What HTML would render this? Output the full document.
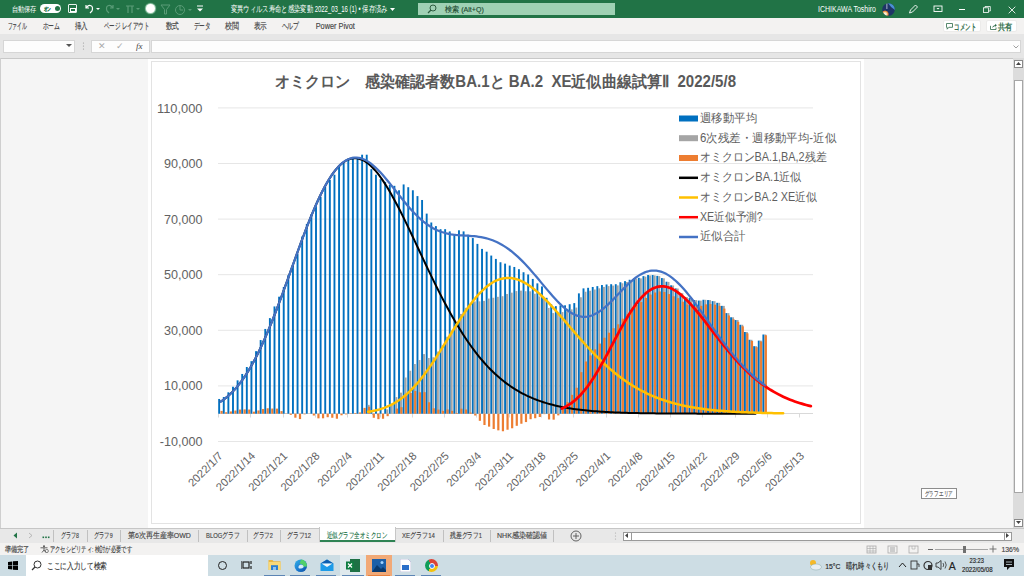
<!DOCTYPE html>
<html><head><meta charset="utf-8">
<style>
*{box-sizing:border-box;margin:0;padding:0}
html,body{width:1024px;height:576px;overflow:hidden;background:#f5f5f5;font-family:"Liberation Sans",sans-serif;}
.a{position:absolute}
.t{position:absolute;white-space:nowrap;line-height:1}
</style></head><body>
<!-- title bar -->
<div class="a" style="left:0;top:0;width:1024px;height:18px;background:#217346"></div>
<div class="a" style="left:40px;top:4px;width:21px;height:9px;border-radius:5px;background:#fff"></div>
<div class="a" style="left:54.5px;top:6px;width:5px;height:5px;border-radius:50%;background:#217346"></div>
<!-- save icon -->
<div class="a" style="left:68px;top:4px;width:9px;height:9px;border:1.2px solid #fff;border-radius:1px;opacity:.9"></div>
<div class="a" style="left:70px;top:8px;width:6px;height:4px;border:1px solid #fff"></div>
<!-- undo -->
<svg class="a" style="left:84px;top:3px" width="20" height="12" viewBox="0 0 20 12"><path d="M2,2 L2,5 L5,5 M2.5,4.5 C5,1 10,2 8,8 L6,10" fill="none" stroke="#fff" stroke-width="1.2"/><path d="M12,5 L16,5 L14,7z" fill="#fff"/></svg>
<svg class="a" style="left:104px;top:3px" width="20" height="12" viewBox="0 0 20 12"><path d="M9,2 L9,5 L6,5 M8.5,4.5 C6,1 1,2 3,8 L5,10" fill="none" stroke="#5a9c77" stroke-width="1.2"/><path d="M12,5 L16,5 L14,7z" fill="#5a9c77"/></svg>
<svg class="a" style="left:124px;top:3px" width="18" height="12" viewBox="0 0 18 12"><path d="M2,3 L10,3 M4,3 L4,10 M8,3 L8,10" fill="none" stroke="#5a9c77" stroke-width="1.2"/><path d="M12,5 L16,5 L14,7z" fill="#5a9c77"/></svg>
<div class="a" style="left:146px;top:4px;width:9px;height:9px;border-radius:50%;background:#fff;box-shadow:0 0 1px 1px #9ccfb1"></div>
<svg class="a" style="left:160px;top:3px" width="40" height="12" viewBox="0 0 40 12"><path d="M1,2 L10,2 L6.5,6.5 L6.5,11 L4.5,11 L4.5,6.5z" fill="none" stroke="#5a9c77" stroke-width="1"/><circle cx="20" cy="7" r="4.5" fill="none" stroke="#5a9c77" stroke-width="1"/><path d="M20,3 L20,7 L23,7" stroke="#5a9c77" fill="none"/><path d="M28,6 L32,6 L30,8z" fill="#5a9c77"/></svg>
<svg class="a" style="left:196px;top:4px" width="8" height="9" viewBox="0 0 8 9"><path d="M1,2 L7,2" stroke="#fff" stroke-width="1"/><path d="M1,4.5 L7,4.5 L4,7.5z" fill="#fff"/></svg>
<div class="a" style="left:418px;top:3px;width:197px;height:12px;background:#9fd1b4"></div>
<svg class="a" style="left:427px;top:4px" width="10" height="10" viewBox="0 0 10 10"><circle cx="6" cy="4" r="3" fill="none" stroke="#2d5d40" stroke-width="1"/><path d="M4,6 L1,9" stroke="#2d5d40" stroke-width="1.2"/></svg>
<svg class="a" style="left:882px;top:2.5px" width="13" height="13" viewBox="0 0 13 13"><defs><clipPath id="av"><circle cx="6.5" cy="6.5" r="6.3"/></clipPath><radialGradient id="fire" cx="0.35" cy="0.72" r="0.4"><stop offset="0" stop-color="#ffffff"/><stop offset="0.45" stop-color="#f7d9a8"/><stop offset="0.8" stop-color="#e07a2a"/><stop offset="1" stop-color="#e07a2a" stop-opacity="0"/></radialGradient></defs><g clip-path="url(#av)"><rect width="13" height="13" fill="#1e3566"/><path d="M6,0 L13,0 L13,7 Q9,5 6,0z" fill="#4b8fd6"/><circle cx="4.5" cy="9" r="5" fill="url(#fire)"/><rect x="4.5" y="0" width="0.8" height="6" fill="#cfd8e6"/></g></svg>
<svg class="a" style="left:908px;top:4px" width="11" height="10" viewBox="0 0 11 10"><path d="M1.5,9 L2.5,6 L7.5,1 L9.5,3 L4.5,8z" fill="none" stroke="#fff" stroke-width="0.9"/></svg>
<svg class="a" style="left:933px;top:5px" width="10" height="8" viewBox="0 0 10 8"><rect x="1" y="1" width="8" height="5.5" fill="none" stroke="#fff" stroke-width="0.9"/><path d="M3.5,3 L6.5,3 L5,4.5z" fill="#fff"/></svg>
<div class="a" style="left:958.5px;top:9px;width:6px;height:1px;background:#fff"></div>
<svg class="a" style="left:983px;top:6px" width="8" height="7" viewBox="0 0 8 7"><rect x="0.5" y="1.8" width="5" height="4.7" fill="none" stroke="#fff" stroke-width="0.8"/><path d="M2,1.8 L2,0.5 L7.3,0.5 L7.3,5 L5.5,5" fill="none" stroke="#fff" stroke-width="0.8"/></svg>
<svg class="a" style="left:1007.5px;top:5.5px" width="8" height="8" viewBox="0 0 8 8"><path d="M0.7,0.7 L7.3,7.3 M7.3,0.7 L0.7,7.3" stroke="#fff" stroke-width="0.85"/></svg>

<svg class="a" style="left:390px;top:8px" width="5" height="3" viewBox="0 0 5 3"><path d="M0,0 L5,0 L2.5,3z" fill="#fff"/></svg>
<!-- ribbon tabs -->
<div class="a" style="left:0;top:18px;width:1024px;height:16px;background:#f3f2f1"></div>
<div class="a" style="left:942.5px;top:20.3px;width:38.5px;height:11.7px;background:#fff;border:1px solid #ecebea;border-radius:2px"></div>
<div class="a" style="left:986px;top:20.3px;width:31.3px;height:11.7px;background:#fff;border:1px solid #ecebea;border-radius:2px"></div>

<svg class="a" style="left:946px;top:23px" width="7" height="7" viewBox="0 0 7 7"><path d="M0.5,0.5 L6.5,0.5 L6.5,4.3 L2.8,4.3 L1.2,6.2 L1.2,4.3 L0.5,4.3z" fill="none" stroke="#2d6b47" stroke-width="0.8"/></svg>
<svg class="a" style="left:990px;top:23px" width="7" height="7" viewBox="0 0 7 7"><path d="M0.5,2.8 L0.5,6.5 L6,6.5 L6,4.5" fill="none" stroke="#2d6b47" stroke-width="0.8"/><path d="M2,5 Q2.5,2.3 5.2,2 L5.2,0.7 L6.8,2.3 L5.2,3.9 L5.2,2.9 Q3.5,3.1 2,5z" fill="#2d6b47"/></svg>
<!-- formula bar -->
<div class="a" style="left:0;top:34px;width:1024px;height:25px;background:#e6e6e6;border-bottom:1px solid #c8c8c8"></div>
<div class="a" style="left:3px;top:40px;width:72px;height:13px;background:#fdfdfd;border:1px solid #d6d6d6"></div>
<svg class="a" style="left:66px;top:44px" width="6" height="4" viewBox="0 0 6 4"><path d="M0,0 L6,0 L3,3z" fill="#555"/></svg>
<svg class="a" style="left:82px;top:42px" width="3" height="9" viewBox="0 0 3 9"><circle cx="1.5" cy="1" r="0.6" fill="#999"/><circle cx="1.5" cy="4" r="0.6" fill="#999"/><circle cx="1.5" cy="7" r="0.6" fill="#999"/></svg>
<div class="a" style="left:91px;top:40px;width:59px;height:13px;background:#fdfdfd;border:1px solid #d6d6d6"></div>
<div class="t" style="left:98px;top:42px;font-size:9px;color:#aaa">✕</div>
<div class="t" style="left:116px;top:42px;font-size:9px;color:#aaa">✓</div>
<div class="t" style="left:136px;top:42px;font-size:9px;color:#444;font-family:'Liberation Serif',serif;font-style:italic">fx</div>
<div class="a" style="left:151px;top:40px;width:870px;height:13px;background:#fdfdfd;border:1px solid #d6d6d6"></div>
<svg class="a" style="left:1013px;top:45px" width="6" height="4" viewBox="0 0 6 4"><path d="M0.5,0.5 L3,3 L5.5,0.5" fill="none" stroke="#888" stroke-width="0.8"/></svg>

<!-- sheet area -->
<div class="a" style="left:0;top:59px;width:1013px;height:469px;background:#f5f5f5"></div>
<div class="a" style="left:0;top:58px;width:1px;height:470px;background:#cfcfcf"></div>
<!-- vertical scrollbar -->
<div class="a" style="left:1013px;top:58px;width:11px;height:470px;background:#dcdcdc"></div>
<div class="a" style="left:1014px;top:60px;width:8.5px;height:7.5px;background:#fff;border:1px solid #8a8a8a"></div>
<svg class="a" style="left:1016px;top:62px" width="5" height="3" viewBox="0 0 5 3"><path d="M0,3 L5,3 L2.5,0z" fill="#444"/></svg>
<div class="a" style="left:1014px;top:79.5px;width:8.5px;height:413px;background:#fff;border:1px solid #a6a6a6"></div>
<div class="a" style="left:1014px;top:518.5px;width:8.5px;height:8px;background:#fff;border:1px solid #8a8a8a"></div>
<svg class="a" style="left:1016px;top:521px" width="5" height="3" viewBox="0 0 5 3"><path d="M0,0 L5,0 L2.5,3z" fill="#444"/></svg>

<!-- chart -->
<div class="a" style="left:148px;top:59px;width:716px;height:469px;background:#fff"></div>
<div class="a" style="left:151px;top:61px;width:710px;height:463px;background:#fff;border:1px solid #e3e3e3"></div>
<svg width="1024" height="576" viewBox="0 0 1024 576" style="position:absolute;left:0;top:0">
<g><line x1="218" y1="107.90" x2="813" y2="107.90" stroke="#E6E6E6" stroke-width="1"/><line x1="218" y1="163.50" x2="813" y2="163.50" stroke="#E6E6E6" stroke-width="1"/><line x1="218" y1="219.10" x2="813" y2="219.10" stroke="#E6E6E6" stroke-width="1"/><line x1="218" y1="274.70" x2="813" y2="274.70" stroke="#E6E6E6" stroke-width="1"/><line x1="218" y1="330.30" x2="813" y2="330.30" stroke="#E6E6E6" stroke-width="1"/><line x1="218" y1="385.90" x2="813" y2="385.90" stroke="#E6E6E6" stroke-width="1"/><line x1="218" y1="441.50" x2="813" y2="441.50" stroke="#E6E6E6" stroke-width="1"/><line x1="218" y1="413.5" x2="813" y2="413.5" stroke="#D9D9D9" stroke-width="1"/><line x1="218.5" y1="413.5" x2="218.5" y2="417.5" stroke="#D9D9D9" stroke-width="1"/><line x1="250.5" y1="413.5" x2="250.5" y2="417.5" stroke="#D9D9D9" stroke-width="1"/><line x1="283.5" y1="413.5" x2="283.5" y2="417.5" stroke="#D9D9D9" stroke-width="1"/><line x1="315.5" y1="413.5" x2="315.5" y2="417.5" stroke="#D9D9D9" stroke-width="1"/><line x1="347.5" y1="413.5" x2="347.5" y2="417.5" stroke="#D9D9D9" stroke-width="1"/><line x1="380.5" y1="413.5" x2="380.5" y2="417.5" stroke="#D9D9D9" stroke-width="1"/><line x1="412.5" y1="413.5" x2="412.5" y2="417.5" stroke="#D9D9D9" stroke-width="1"/><line x1="444.5" y1="413.5" x2="444.5" y2="417.5" stroke="#D9D9D9" stroke-width="1"/><line x1="476.5" y1="413.5" x2="476.5" y2="417.5" stroke="#D9D9D9" stroke-width="1"/><line x1="509.5" y1="413.5" x2="509.5" y2="417.5" stroke="#D9D9D9" stroke-width="1"/><line x1="541.5" y1="413.5" x2="541.5" y2="417.5" stroke="#D9D9D9" stroke-width="1"/><line x1="573.5" y1="413.5" x2="573.5" y2="417.5" stroke="#D9D9D9" stroke-width="1"/><line x1="606.5" y1="413.5" x2="606.5" y2="417.5" stroke="#D9D9D9" stroke-width="1"/><line x1="638.5" y1="413.5" x2="638.5" y2="417.5" stroke="#D9D9D9" stroke-width="1"/><line x1="670.5" y1="413.5" x2="670.5" y2="417.5" stroke="#D9D9D9" stroke-width="1"/><line x1="702.5" y1="413.5" x2="702.5" y2="417.5" stroke="#D9D9D9" stroke-width="1"/><line x1="735.5" y1="413.5" x2="735.5" y2="417.5" stroke="#D9D9D9" stroke-width="1"/><line x1="767.5" y1="413.5" x2="767.5" y2="417.5" stroke="#D9D9D9" stroke-width="1"/><line x1="799.5" y1="413.5" x2="799.5" y2="417.5" stroke="#D9D9D9" stroke-width="1"/></g>
<g><rect x="218.20" y="398.97" width="1.90" height="14.73" fill="#0070C0"/><rect x="220.50" y="410.90" width="2.20" height="2.80" fill="#ED7D31"/><rect x="222.81" y="397.03" width="1.90" height="16.67" fill="#0070C0"/><rect x="225.11" y="412.23" width="2.20" height="1.47" fill="#ED7D31"/><rect x="227.42" y="392.30" width="1.90" height="21.40" fill="#0070C0"/><rect x="229.72" y="411.44" width="2.20" height="2.26" fill="#ED7D31"/><rect x="232.04" y="386.74" width="1.90" height="26.96" fill="#0070C0"/><rect x="234.34" y="410.53" width="2.20" height="3.17" fill="#ED7D31"/><rect x="236.65" y="380.35" width="1.90" height="33.35" fill="#0070C0"/><rect x="238.95" y="409.56" width="2.20" height="4.14" fill="#ED7D31"/><rect x="241.26" y="373.96" width="1.90" height="39.74" fill="#0070C0"/><rect x="243.56" y="409.40" width="2.20" height="4.30" fill="#ED7D31"/><rect x="245.87" y="367.01" width="1.90" height="46.69" fill="#0070C0"/><rect x="248.17" y="409.54" width="2.20" height="4.16" fill="#ED7D31"/><rect x="250.48" y="361.18" width="1.90" height="52.52" fill="#0070C0"/><rect x="252.78" y="411.65" width="2.20" height="2.05" fill="#ED7D31"/><rect x="255.10" y="351.17" width="1.90" height="62.53" fill="#0070C0"/><rect x="257.40" y="410.45" width="2.20" height="3.25" fill="#ED7D31"/><rect x="259.71" y="340.06" width="1.90" height="73.64" fill="#0070C0"/><rect x="262.01" y="408.96" width="2.20" height="4.74" fill="#ED7D31"/><rect x="264.32" y="328.94" width="1.90" height="84.76" fill="#0070C0"/><rect x="266.62" y="408.26" width="2.20" height="5.44" fill="#ED7D31"/><rect x="268.93" y="318.10" width="1.90" height="95.60" fill="#0070C0"/><rect x="271.23" y="408.54" width="2.20" height="5.16" fill="#ED7D31"/><rect x="273.54" y="306.43" width="1.90" height="107.27" fill="#0070C0"/><rect x="275.84" y="408.60" width="2.20" height="5.10" fill="#ED7D31"/><rect x="278.16" y="296.70" width="1.90" height="117.00" fill="#0070C0"/><rect x="280.46" y="411.11" width="2.20" height="2.59" fill="#ED7D31"/><rect x="282.77" y="286.98" width="1.90" height="126.72" fill="#0070C0"/><rect x="285.07" y="413.70" width="2.20" height="0.28" fill="#ED7D31"/><rect x="287.38" y="275.03" width="1.90" height="138.67" fill="#0070C0"/><rect x="289.68" y="413.70" width="2.20" height="1.14" fill="#ED7D31"/><rect x="291.99" y="265.02" width="1.90" height="148.68" fill="#0070C0"/><rect x="294.29" y="413.70" width="2.20" height="4.01" fill="#ED7D31"/><rect x="296.60" y="253.63" width="1.90" height="160.07" fill="#0070C0"/><rect x="298.90" y="413.70" width="2.20" height="5.38" fill="#ED7D31"/><rect x="301.22" y="236.40" width="1.90" height="177.30" fill="#0070C0"/><rect x="303.52" y="413.70" width="2.20" height="0.63" fill="#ED7D31"/><rect x="305.83" y="223.89" width="1.90" height="189.81" fill="#0070C0"/><rect x="308.13" y="413.70" width="2.20" height="0.14" fill="#ED7D31"/><rect x="310.44" y="214.17" width="1.90" height="199.53" fill="#0070C0"/><rect x="312.74" y="413.70" width="2.20" height="1.81" fill="#ED7D31"/><rect x="315.05" y="206.39" width="1.90" height="207.31" fill="#0070C0"/><rect x="317.35" y="413.70" width="2.20" height="4.65" fill="#ED7D31"/><rect x="319.66" y="196.66" width="1.90" height="217.04" fill="#0070C0"/><rect x="321.96" y="413.70" width="2.20" height="4.61" fill="#ED7D31"/><rect x="324.28" y="186.93" width="1.90" height="226.77" fill="#0070C0"/><rect x="326.58" y="413.70" width="2.20" height="3.52" fill="#ED7D31"/><rect x="328.89" y="179.99" width="1.90" height="233.71" fill="#0070C0"/><rect x="331.19" y="413.70" width="2.20" height="4.06" fill="#ED7D31"/><rect x="333.50" y="174.71" width="1.90" height="238.99" fill="#0070C0"/><rect x="335.80" y="413.70" width="2.20" height="5.01" fill="#ED7D31"/><rect x="338.11" y="166.37" width="1.90" height="247.33" fill="#0070C0"/><rect x="340.41" y="413.70" width="2.20" height="1.59" fill="#ED7D31"/><rect x="342.72" y="161.92" width="1.90" height="251.78" fill="#0070C0"/><rect x="345.02" y="413.70" width="2.20" height="0.71" fill="#ED7D31"/><rect x="347.34" y="158.59" width="1.90" height="255.11" fill="#0070C0"/><rect x="349.64" y="413.27" width="2.20" height="0.43" fill="#ED7D31"/><rect x="351.95" y="157.48" width="1.90" height="256.22" fill="#0070C0"/><rect x="354.25" y="412.98" width="2.20" height="0.72" fill="#ED7D31"/><rect x="356.56" y="157.48" width="1.90" height="256.22" fill="#0070C0"/><rect x="358.86" y="412.47" width="2.20" height="1.23" fill="#ED7D31"/><rect x="361.17" y="154.70" width="1.90" height="259.00" fill="#0070C0"/><rect x="363.47" y="407.89" width="2.20" height="5.81" fill="#ED7D31"/><rect x="365.78" y="154.70" width="1.90" height="259.00" fill="#0070C0"/><rect x="367.68" y="404.85" width="2.00" height="8.85" fill="#A5A5A5"/><rect x="368.08" y="406.74" width="2.20" height="6.96" fill="#ED7D31"/><rect x="370.40" y="169.15" width="1.90" height="244.55" fill="#0070C0"/><rect x="372.30" y="413.70" width="2.00" height="1.42" fill="#A5A5A5"/><rect x="372.70" y="413.70" width="2.20" height="4.10" fill="#ED7D31"/><rect x="375.01" y="174.71" width="1.90" height="238.99" fill="#0070C0"/><rect x="376.91" y="413.70" width="2.00" height="1.73" fill="#A5A5A5"/><rect x="377.31" y="413.70" width="2.20" height="5.46" fill="#ED7D31"/><rect x="379.62" y="179.15" width="1.90" height="234.55" fill="#0070C0"/><rect x="381.92" y="413.70" width="2.20" height="5.06" fill="#ED7D31"/><rect x="384.23" y="181.93" width="1.90" height="231.77" fill="#0070C0"/><rect x="386.13" y="409.41" width="2.00" height="4.29" fill="#A5A5A5"/><rect x="386.53" y="413.70" width="2.20" height="2.49" fill="#ED7D31"/><rect x="388.84" y="184.99" width="1.90" height="228.71" fill="#0070C0"/><rect x="390.74" y="404.68" width="2.00" height="9.02" fill="#A5A5A5"/><rect x="391.14" y="413.58" width="2.20" height="0.12" fill="#ED7D31"/><rect x="393.46" y="185.82" width="1.90" height="227.88" fill="#0070C0"/><rect x="395.36" y="397.11" width="2.00" height="16.59" fill="#A5A5A5"/><rect x="395.76" y="408.58" width="2.20" height="5.12" fill="#ED7D31"/><rect x="398.07" y="190.27" width="1.90" height="223.43" fill="#0070C0"/><rect x="399.97" y="392.65" width="2.00" height="21.05" fill="#A5A5A5"/><rect x="400.37" y="407.19" width="2.20" height="6.51" fill="#ED7D31"/><rect x="402.68" y="184.43" width="1.90" height="229.27" fill="#0070C0"/><rect x="404.58" y="377.52" width="2.00" height="36.18" fill="#A5A5A5"/><rect x="404.98" y="395.65" width="2.20" height="18.05" fill="#ED7D31"/><rect x="407.29" y="187.21" width="1.90" height="226.49" fill="#0070C0"/><rect x="409.19" y="370.72" width="2.00" height="42.98" fill="#A5A5A5"/><rect x="409.59" y="393.01" width="2.20" height="20.69" fill="#ED7D31"/><rect x="411.90" y="190.27" width="1.90" height="223.43" fill="#0070C0"/><rect x="413.80" y="364.03" width="2.00" height="49.67" fill="#A5A5A5"/><rect x="414.20" y="391.02" width="2.20" height="22.68" fill="#ED7D31"/><rect x="416.52" y="196.10" width="1.90" height="217.60" fill="#0070C0"/><rect x="418.42" y="360.03" width="2.00" height="53.67" fill="#A5A5A5"/><rect x="418.82" y="392.28" width="2.20" height="21.42" fill="#ED7D31"/><rect x="421.13" y="199.99" width="1.90" height="213.71" fill="#0070C0"/><rect x="423.03" y="354.09" width="2.00" height="59.61" fill="#A5A5A5"/><rect x="423.43" y="392.14" width="2.20" height="21.56" fill="#ED7D31"/><rect x="425.74" y="213.61" width="1.90" height="200.09" fill="#0070C0"/><rect x="427.64" y="357.98" width="2.00" height="55.72" fill="#A5A5A5"/><rect x="428.04" y="402.28" width="2.20" height="11.42" fill="#ED7D31"/><rect x="430.35" y="222.50" width="1.90" height="191.20" fill="#0070C0"/><rect x="432.25" y="357.29" width="2.00" height="56.41" fill="#A5A5A5"/><rect x="432.65" y="408.29" width="2.20" height="5.41" fill="#ED7D31"/><rect x="434.96" y="226.12" width="1.90" height="187.58" fill="#0070C0"/><rect x="436.86" y="351.56" width="2.00" height="62.14" fill="#A5A5A5"/><rect x="437.26" y="409.58" width="2.20" height="4.12" fill="#ED7D31"/><rect x="439.58" y="229.17" width="1.90" height="184.53" fill="#0070C0"/><rect x="441.48" y="345.54" width="2.00" height="68.16" fill="#A5A5A5"/><rect x="441.88" y="410.84" width="2.20" height="2.86" fill="#ED7D31"/><rect x="444.19" y="229.17" width="1.90" height="184.53" fill="#0070C0"/><rect x="446.09" y="336.79" width="2.00" height="76.91" fill="#A5A5A5"/><rect x="446.49" y="409.52" width="2.20" height="4.18" fill="#ED7D31"/><rect x="448.80" y="231.40" width="1.90" height="182.30" fill="#0070C0"/><rect x="450.70" y="330.62" width="2.00" height="83.08" fill="#A5A5A5"/><rect x="451.10" y="410.82" width="2.20" height="2.88" fill="#ED7D31"/><rect x="453.41" y="234.18" width="1.90" height="179.52" fill="#0070C0"/><rect x="455.31" y="325.39" width="2.00" height="88.31" fill="#A5A5A5"/><rect x="455.71" y="412.98" width="2.20" height="0.72" fill="#ED7D31"/><rect x="458.02" y="230.29" width="1.90" height="183.41" fill="#0070C0"/><rect x="459.92" y="313.89" width="2.00" height="99.81" fill="#A5A5A5"/><rect x="460.32" y="408.69" width="2.20" height="5.01" fill="#ED7D31"/><rect x="462.64" y="231.40" width="1.90" height="182.30" fill="#0070C0"/><rect x="464.54" y="307.82" width="2.00" height="105.88" fill="#A5A5A5"/><rect x="464.94" y="409.51" width="2.20" height="4.19" fill="#ED7D31"/><rect x="467.25" y="234.73" width="1.90" height="178.97" fill="#0070C0"/><rect x="469.15" y="304.40" width="2.00" height="109.30" fill="#A5A5A5"/><rect x="469.55" y="412.56" width="2.20" height="1.14" fill="#ED7D31"/><rect x="471.86" y="238.07" width="1.90" height="175.63" fill="#0070C0"/><rect x="473.76" y="301.41" width="2.00" height="112.29" fill="#A5A5A5"/><rect x="474.16" y="413.70" width="2.20" height="1.83" fill="#ED7D31"/><rect x="476.47" y="243.90" width="1.90" height="169.80" fill="#0070C0"/><rect x="478.37" y="301.34" width="2.00" height="112.36" fill="#A5A5A5"/><rect x="478.77" y="413.70" width="2.20" height="7.11" fill="#ED7D31"/><rect x="481.08" y="248.91" width="1.90" height="164.79" fill="#0070C0"/><rect x="482.98" y="300.86" width="2.00" height="112.84" fill="#A5A5A5"/><rect x="483.38" y="413.70" width="2.20" height="11.30" fill="#ED7D31"/><rect x="485.70" y="251.68" width="1.90" height="162.02" fill="#0070C0"/><rect x="487.60" y="298.56" width="2.00" height="115.14" fill="#A5A5A5"/><rect x="488.00" y="413.70" width="2.20" height="12.93" fill="#ED7D31"/><rect x="490.31" y="255.57" width="1.90" height="158.13" fill="#0070C0"/><rect x="492.21" y="297.77" width="2.00" height="115.93" fill="#A5A5A5"/><rect x="492.61" y="413.70" width="2.20" height="15.29" fill="#ED7D31"/><rect x="494.92" y="258.91" width="1.90" height="154.79" fill="#0070C0"/><rect x="496.82" y="296.80" width="2.00" height="116.90" fill="#A5A5A5"/><rect x="497.22" y="413.70" width="2.20" height="16.65" fill="#ED7D31"/><rect x="499.53" y="262.24" width="1.90" height="151.46" fill="#0070C0"/><rect x="501.43" y="296.20" width="2.00" height="117.50" fill="#A5A5A5"/><rect x="501.83" y="413.70" width="2.20" height="17.55" fill="#ED7D31"/><rect x="504.14" y="263.63" width="1.90" height="150.07" fill="#0070C0"/><rect x="506.04" y="293.99" width="2.00" height="119.71" fill="#A5A5A5"/><rect x="506.44" y="413.70" width="2.20" height="16.03" fill="#ED7D31"/><rect x="508.76" y="265.58" width="1.90" height="148.12" fill="#0070C0"/><rect x="510.66" y="292.66" width="2.00" height="121.04" fill="#A5A5A5"/><rect x="511.06" y="413.70" width="2.20" height="14.58" fill="#ED7D31"/><rect x="513.37" y="266.97" width="1.90" height="146.73" fill="#0070C0"/><rect x="515.27" y="291.07" width="2.00" height="122.63" fill="#A5A5A5"/><rect x="515.67" y="413.70" width="2.20" height="12.11" fill="#ED7D31"/><rect x="517.98" y="269.19" width="1.90" height="144.51" fill="#0070C0"/><rect x="519.88" y="290.61" width="2.00" height="123.09" fill="#A5A5A5"/><rect x="520.28" y="413.70" width="2.20" height="10.03" fill="#ED7D31"/><rect x="522.59" y="272.25" width="1.90" height="141.45" fill="#0070C0"/><rect x="524.49" y="291.23" width="2.00" height="122.47" fill="#A5A5A5"/><rect x="524.89" y="413.70" width="2.20" height="8.37" fill="#ED7D31"/><rect x="527.20" y="274.47" width="1.90" height="139.23" fill="#0070C0"/><rect x="529.10" y="291.27" width="2.00" height="122.43" fill="#A5A5A5"/><rect x="529.50" y="413.70" width="2.20" height="5.51" fill="#ED7D31"/><rect x="531.82" y="278.92" width="1.90" height="134.78" fill="#0070C0"/><rect x="533.72" y="293.75" width="2.00" height="119.95" fill="#A5A5A5"/><rect x="534.12" y="413.70" width="2.20" height="4.54" fill="#ED7D31"/><rect x="536.43" y="283.36" width="1.90" height="130.34" fill="#0070C0"/><rect x="538.33" y="296.44" width="2.00" height="117.26" fill="#A5A5A5"/><rect x="538.73" y="413.70" width="2.20" height="3.30" fill="#ED7D31"/><rect x="541.04" y="286.42" width="1.90" height="127.28" fill="#0070C0"/><rect x="542.94" y="297.93" width="2.00" height="115.77" fill="#A5A5A5"/><rect x="543.34" y="413.70" width="2.20" height="0.45" fill="#ED7D31"/><rect x="545.65" y="297.82" width="1.90" height="115.88" fill="#0070C0"/><rect x="547.55" y="307.92" width="2.00" height="105.78" fill="#A5A5A5"/><rect x="547.95" y="413.70" width="2.20" height="5.77" fill="#ED7D31"/><rect x="550.26" y="304.21" width="1.90" height="109.49" fill="#0070C0"/><rect x="552.16" y="313.07" width="2.00" height="100.63" fill="#A5A5A5"/><rect x="552.56" y="413.70" width="2.20" height="5.97" fill="#ED7D31"/><rect x="554.88" y="306.15" width="1.90" height="107.55" fill="#0070C0"/><rect x="556.78" y="313.91" width="2.00" height="99.79" fill="#A5A5A5"/><rect x="557.18" y="413.70" width="2.20" height="1.67" fill="#ED7D31"/><rect x="559.49" y="305.32" width="1.90" height="108.38" fill="#0070C0"/><rect x="561.39" y="312.09" width="2.00" height="101.61" fill="#A5A5A5"/><rect x="561.79" y="408.28" width="2.20" height="5.42" fill="#ED7D31"/><rect x="564.10" y="305.32" width="1.90" height="108.38" fill="#0070C0"/><rect x="566.00" y="311.23" width="2.00" height="102.47" fill="#A5A5A5"/><rect x="566.40" y="402.07" width="2.20" height="11.63" fill="#ED7D31"/><rect x="568.71" y="304.21" width="1.90" height="109.49" fill="#0070C0"/><rect x="570.61" y="309.36" width="2.00" height="104.34" fill="#A5A5A5"/><rect x="571.01" y="394.83" width="2.20" height="18.87" fill="#ED7D31"/><rect x="573.32" y="303.10" width="1.90" height="110.60" fill="#0070C0"/><rect x="575.22" y="307.57" width="2.00" height="106.13" fill="#A5A5A5"/><rect x="575.62" y="387.71" width="2.20" height="25.99" fill="#ED7D31"/><rect x="577.94" y="293.37" width="1.90" height="120.33" fill="#0070C0"/><rect x="579.84" y="297.26" width="2.00" height="116.44" fill="#A5A5A5"/><rect x="580.24" y="372.13" width="2.20" height="41.57" fill="#ED7D31"/><rect x="582.55" y="288.37" width="1.90" height="125.33" fill="#0070C0"/><rect x="584.45" y="291.74" width="2.00" height="121.96" fill="#A5A5A5"/><rect x="584.85" y="361.46" width="2.20" height="52.24" fill="#ED7D31"/><rect x="587.16" y="287.81" width="1.90" height="125.89" fill="#0070C0"/><rect x="589.06" y="290.73" width="2.00" height="122.97" fill="#A5A5A5"/><rect x="589.46" y="355.44" width="2.20" height="58.26" fill="#ED7D31"/><rect x="591.77" y="286.98" width="1.90" height="126.72" fill="#0070C0"/><rect x="593.67" y="289.50" width="2.00" height="124.20" fill="#A5A5A5"/><rect x="594.07" y="349.38" width="2.20" height="64.32" fill="#ED7D31"/><rect x="596.38" y="286.14" width="1.90" height="127.56" fill="#0070C0"/><rect x="598.28" y="288.32" width="2.00" height="125.38" fill="#A5A5A5"/><rect x="598.68" y="343.56" width="2.20" height="70.14" fill="#ED7D31"/><rect x="601.00" y="285.03" width="1.90" height="128.67" fill="#0070C0"/><rect x="602.90" y="286.91" width="2.00" height="126.79" fill="#A5A5A5"/><rect x="603.30" y="337.72" width="2.20" height="75.98" fill="#ED7D31"/><rect x="605.61" y="284.48" width="1.90" height="129.22" fill="#0070C0"/><rect x="607.51" y="286.10" width="2.00" height="127.60" fill="#A5A5A5"/><rect x="607.91" y="332.70" width="2.20" height="81.00" fill="#ED7D31"/><rect x="610.22" y="284.20" width="1.90" height="129.50" fill="#0070C0"/><rect x="612.12" y="285.59" width="2.00" height="128.11" fill="#A5A5A5"/><rect x="612.52" y="328.22" width="2.20" height="85.48" fill="#ED7D31"/><rect x="614.83" y="284.20" width="1.90" height="129.50" fill="#0070C0"/><rect x="616.73" y="285.39" width="2.00" height="128.31" fill="#A5A5A5"/><rect x="617.13" y="324.28" width="2.20" height="89.42" fill="#ED7D31"/><rect x="619.44" y="282.25" width="1.90" height="131.45" fill="#0070C0"/><rect x="621.34" y="283.28" width="2.00" height="130.42" fill="#A5A5A5"/><rect x="621.74" y="318.67" width="2.20" height="95.03" fill="#ED7D31"/><rect x="624.06" y="281.14" width="1.90" height="132.56" fill="#0070C0"/><rect x="625.96" y="282.02" width="2.00" height="131.68" fill="#A5A5A5"/><rect x="626.36" y="314.14" width="2.20" height="99.56" fill="#ED7D31"/><rect x="628.67" y="279.75" width="1.90" height="133.95" fill="#0070C0"/><rect x="630.57" y="280.50" width="2.00" height="133.20" fill="#A5A5A5"/><rect x="630.97" y="309.59" width="2.20" height="104.11" fill="#ED7D31"/><rect x="633.28" y="278.08" width="1.90" height="135.62" fill="#0070C0"/><rect x="635.18" y="278.73" width="2.00" height="134.97" fill="#A5A5A5"/><rect x="635.58" y="305.01" width="2.20" height="108.69" fill="#ED7D31"/><rect x="637.89" y="277.81" width="1.90" height="135.89" fill="#0070C0"/><rect x="639.79" y="278.36" width="2.00" height="135.34" fill="#A5A5A5"/><rect x="640.19" y="302.05" width="2.20" height="111.65" fill="#ED7D31"/><rect x="642.50" y="276.14" width="1.90" height="137.56" fill="#0070C0"/><rect x="644.40" y="276.61" width="2.00" height="137.09" fill="#A5A5A5"/><rect x="644.80" y="297.92" width="2.20" height="115.78" fill="#ED7D31"/><rect x="647.12" y="275.03" width="1.90" height="138.67" fill="#0070C0"/><rect x="649.02" y="275.43" width="2.00" height="138.27" fill="#A5A5A5"/><rect x="649.42" y="294.55" width="2.20" height="119.15" fill="#ED7D31"/><rect x="651.73" y="275.03" width="1.90" height="138.67" fill="#0070C0"/><rect x="653.63" y="275.37" width="2.00" height="138.33" fill="#A5A5A5"/><rect x="654.03" y="292.50" width="2.20" height="121.20" fill="#ED7D31"/><rect x="656.34" y="275.86" width="1.90" height="137.84" fill="#0070C0"/><rect x="658.24" y="276.15" width="2.00" height="137.55" fill="#A5A5A5"/><rect x="658.64" y="291.46" width="2.20" height="122.24" fill="#ED7D31"/><rect x="660.95" y="278.08" width="1.90" height="135.62" fill="#0070C0"/><rect x="662.85" y="278.33" width="2.00" height="135.37" fill="#A5A5A5"/><rect x="663.25" y="291.99" width="2.20" height="121.71" fill="#ED7D31"/><rect x="665.56" y="281.70" width="1.90" height="132.00" fill="#0070C0"/><rect x="667.46" y="281.91" width="2.00" height="131.79" fill="#A5A5A5"/><rect x="667.86" y="294.07" width="2.20" height="119.63" fill="#ED7D31"/><rect x="670.18" y="285.31" width="1.90" height="128.39" fill="#0070C0"/><rect x="672.08" y="285.49" width="2.00" height="128.21" fill="#A5A5A5"/><rect x="672.48" y="296.30" width="2.20" height="117.40" fill="#ED7D31"/><rect x="674.79" y="288.37" width="1.90" height="125.33" fill="#0070C0"/><rect x="676.69" y="288.52" width="2.00" height="125.18" fill="#A5A5A5"/><rect x="677.09" y="298.12" width="2.20" height="115.58" fill="#ED7D31"/><rect x="679.40" y="293.09" width="1.90" height="120.61" fill="#0070C0"/><rect x="681.30" y="293.22" width="2.00" height="120.48" fill="#A5A5A5"/><rect x="681.70" y="301.72" width="2.20" height="111.98" fill="#ED7D31"/><rect x="684.01" y="296.98" width="1.90" height="116.72" fill="#0070C0"/><rect x="685.91" y="297.09" width="2.00" height="116.61" fill="#A5A5A5"/><rect x="686.31" y="304.61" width="2.20" height="109.09" fill="#ED7D31"/><rect x="688.62" y="298.09" width="1.90" height="115.61" fill="#0070C0"/><rect x="690.52" y="298.18" width="2.00" height="115.52" fill="#A5A5A5"/><rect x="690.92" y="304.83" width="2.20" height="108.87" fill="#ED7D31"/><rect x="693.24" y="300.04" width="1.90" height="113.66" fill="#0070C0"/><rect x="695.14" y="300.12" width="2.00" height="113.58" fill="#A5A5A5"/><rect x="695.54" y="305.97" width="2.20" height="107.73" fill="#ED7D31"/><rect x="697.85" y="300.59" width="1.90" height="113.11" fill="#0070C0"/><rect x="699.75" y="300.66" width="2.00" height="113.04" fill="#A5A5A5"/><rect x="700.15" y="305.82" width="2.20" height="107.88" fill="#ED7D31"/><rect x="702.46" y="299.76" width="1.90" height="113.94" fill="#0070C0"/><rect x="704.36" y="299.82" width="2.00" height="113.88" fill="#A5A5A5"/><rect x="704.76" y="304.35" width="2.20" height="109.35" fill="#ED7D31"/><rect x="707.07" y="300.04" width="1.90" height="113.66" fill="#0070C0"/><rect x="708.97" y="300.08" width="2.00" height="113.62" fill="#A5A5A5"/><rect x="709.37" y="304.06" width="2.20" height="109.64" fill="#ED7D31"/><rect x="711.68" y="301.15" width="1.90" height="112.55" fill="#0070C0"/><rect x="713.58" y="301.19" width="2.00" height="112.51" fill="#A5A5A5"/><rect x="713.98" y="304.68" width="2.20" height="109.02" fill="#ED7D31"/><rect x="716.30" y="302.82" width="1.90" height="110.88" fill="#0070C0"/><rect x="718.20" y="302.85" width="2.00" height="110.85" fill="#A5A5A5"/><rect x="718.60" y="305.90" width="2.20" height="107.80" fill="#ED7D31"/><rect x="720.91" y="305.87" width="1.90" height="107.83" fill="#0070C0"/><rect x="722.81" y="305.90" width="2.00" height="107.80" fill="#A5A5A5"/><rect x="723.21" y="308.57" width="2.20" height="105.13" fill="#ED7D31"/><rect x="725.52" y="313.10" width="1.90" height="100.60" fill="#0070C0"/><rect x="727.42" y="313.12" width="2.00" height="100.58" fill="#A5A5A5"/><rect x="727.82" y="315.46" width="2.20" height="98.24" fill="#ED7D31"/><rect x="730.13" y="317.27" width="1.90" height="96.43" fill="#0070C0"/><rect x="732.03" y="317.29" width="2.00" height="96.41" fill="#A5A5A5"/><rect x="732.43" y="319.32" width="2.20" height="94.38" fill="#ED7D31"/><rect x="734.74" y="320.05" width="1.90" height="93.65" fill="#0070C0"/><rect x="736.64" y="320.06" width="2.00" height="93.64" fill="#A5A5A5"/><rect x="737.04" y="321.84" width="2.20" height="91.86" fill="#ED7D31"/><rect x="739.36" y="324.77" width="1.90" height="88.93" fill="#0070C0"/><rect x="741.26" y="324.79" width="2.00" height="88.91" fill="#A5A5A5"/><rect x="741.66" y="326.33" width="2.20" height="87.37" fill="#ED7D31"/><rect x="743.97" y="332.00" width="1.90" height="81.70" fill="#0070C0"/><rect x="745.87" y="332.01" width="2.00" height="81.69" fill="#A5A5A5"/><rect x="746.27" y="333.35" width="2.20" height="80.35" fill="#ED7D31"/><rect x="748.58" y="339.78" width="1.90" height="73.92" fill="#0070C0"/><rect x="750.48" y="339.79" width="2.00" height="73.91" fill="#A5A5A5"/><rect x="750.88" y="340.95" width="2.20" height="72.75" fill="#ED7D31"/><rect x="753.19" y="346.17" width="1.90" height="67.53" fill="#0070C0"/><rect x="755.09" y="346.18" width="2.00" height="67.52" fill="#A5A5A5"/><rect x="755.49" y="347.19" width="2.20" height="66.51" fill="#ED7D31"/><rect x="757.80" y="340.61" width="1.90" height="73.09" fill="#0070C0"/><rect x="759.70" y="340.62" width="2.00" height="73.08" fill="#A5A5A5"/><rect x="760.10" y="341.49" width="2.20" height="72.21" fill="#ED7D31"/><rect x="762.42" y="334.50" width="1.90" height="79.20" fill="#0070C0"/><rect x="764.32" y="334.50" width="2.00" height="79.20" fill="#A5A5A5"/><rect x="764.72" y="335.26" width="2.20" height="78.44" fill="#ED7D31"/></g>
<g><path d="M220.51,401.77 L222.81,400.21 L225.12,398.49 L227.42,396.61 L229.73,394.56 L232.04,392.33 L234.34,389.91 L236.65,387.30 L238.95,384.49 L241.26,381.48 L243.57,378.26 L245.87,374.82 L248.18,371.17 L250.48,367.31 L252.79,363.23 L255.10,358.93 L257.40,354.43 L259.71,349.71 L262.01,344.79 L264.32,339.68 L266.63,334.38 L268.93,328.91 L271.24,323.26 L273.54,317.47 L275.85,311.53 L278.16,305.47 L280.46,299.30 L282.77,293.04 L285.07,286.70 L287.38,280.31 L289.69,273.88 L291.99,267.44 L294.30,261.01 L296.60,254.60 L298.91,248.25 L301.22,241.96 L303.52,235.77 L305.83,229.70 L308.13,223.75 L310.44,217.97 L312.75,212.36 L315.05,206.94 L317.36,201.74 L319.66,196.77 L321.97,192.05 L324.28,187.59 L326.58,183.41 L328.89,179.52 L331.19,175.93 L333.50,172.66 L335.81,169.70 L338.11,167.07 L340.42,164.78 L342.72,162.83 L345.03,161.22 L347.34,159.95 L349.64,159.02 L351.95,158.44 L354.25,158.19 L356.56,158.28 L358.87,158.70 L361.17,159.45 L363.48,160.51 L365.78,161.88 L368.09,163.54 L370.40,165.50 L372.70,167.73 L375.01,170.22 L377.31,172.97 L379.62,175.96 L381.93,179.17 L384.23,182.60 L386.54,186.22 L388.84,190.03 L391.15,194.01 L393.46,198.14 L395.76,202.41 L398.07,206.81 L400.37,211.31 L402.68,215.92 L404.99,220.61 L407.29,225.37 L409.60,230.19 L411.90,235.05 L414.21,239.94 L416.52,244.85 L418.82,249.77 L421.13,254.69 L423.43,259.60 L425.74,264.48 L428.05,269.34 L430.35,274.15 L432.66,278.91 L434.96,283.62 L437.27,288.26 L439.58,292.84 L441.88,297.34 L444.19,301.75 L446.49,306.09 L448.80,310.33 L451.11,314.48 L453.41,318.54 L455.72,322.49 L458.02,326.34 L460.33,330.09 L462.64,333.74 L464.94,337.28 L467.25,340.71 L469.55,344.03 L471.86,347.25 L474.17,350.36 L476.47,353.36 L478.78,356.26 L481.08,359.06 L483.39,361.75 L485.70,364.33 L488.00,366.82 L490.31,369.21 L492.61,371.50 L494.92,373.70 L497.23,375.80 L499.53,377.82 L501.84,379.75 L504.14,381.59 L506.45,383.35 L508.76,385.02 L511.06,386.62 L513.37,388.15 L515.67,389.60 L517.98,390.98 L520.29,392.29 L522.59,393.53 L524.90,394.72 L527.20,395.84 L529.51,396.90 L531.82,397.91 L534.12,398.87 L536.43,399.77 L538.73,400.62 L541.04,401.43 L543.35,402.20 L545.65,402.92 L547.96,403.60 L550.26,404.24 L552.57,404.84 L554.88,405.41 L557.18,405.95 L559.49,406.45 L561.79,406.92 L564.10,407.37 L566.41,407.79 L568.71,408.18 L571.02,408.55 L573.32,408.90 L575.63,409.22 L577.94,409.53 L580.24,409.81 L582.55,410.08 L584.85,410.33 L587.16,410.56 L589.47,410.78 L591.77,410.98 L594.08,411.18 L596.38,411.35 L598.69,411.52 L601.00,411.68 L603.30,411.82 L605.61,411.96 L607.91,412.08 L610.22,412.20 L612.53,412.31 L614.83,412.41 L617.14,412.50 L619.44,412.59 L621.75,412.67 L624.06,412.75 L626.36,412.82 L628.67,412.89 L630.97,412.95 L633.28,413.00 L635.59,413.06 L637.89,413.11 L640.20,413.15 L642.50,413.19 L644.81,413.23 L647.12,413.27 L649.42,413.30 L651.73,413.33 L654.03,413.36 L656.34,413.39 L658.65,413.41 L660.95,413.43 L663.26,413.45 L665.56,413.47 L667.87,413.49 L670.18,413.51 L672.48,413.52 L674.79,413.54 L677.09,413.55 L679.40,413.56 L681.71,413.57 L684.01,413.58 L686.32,413.59 L688.62,413.60 L690.93,413.61 L693.24,413.62 L695.54,413.62 L697.85,413.63 L700.15,413.64 L702.46,413.64 L704.77,413.65 L707.07,413.65 L709.38,413.65 L711.68,413.66 L713.99,413.66 L716.30,413.66 L718.60,413.67 L720.91,413.67 L723.21,413.67 L725.52,413.67 L727.83,413.68 L730.13,413.68 L732.44,413.68 L734.74,413.68 L737.05,413.68 L739.36,413.69 L741.66,413.69 L743.97,413.69 L746.27,413.69 L748.58,413.69 L750.89,413.69 L753.19,413.69 L755.50,413.69" fill="none" stroke="#000" stroke-width="2" stroke-linejoin="round" stroke-linecap="round"/><path d="M368.09,411.81 L370.40,411.44 L372.70,411.02 L375.01,410.53 L377.31,409.97 L379.62,409.34 L381.93,408.62 L384.23,407.82 L386.54,406.92 L388.84,405.91 L391.15,404.80 L393.46,403.58 L395.76,402.23 L398.07,400.77 L400.37,399.17 L402.68,397.44 L404.99,395.57 L407.29,393.56 L409.60,391.42 L411.90,389.13 L414.21,386.71 L416.52,384.14 L418.82,381.45 L421.13,378.62 L423.43,375.66 L425.74,372.58 L428.05,369.39 L430.35,366.10 L432.66,362.71 L434.96,359.23 L437.27,355.68 L439.58,352.06 L441.88,348.40 L444.19,344.69 L446.49,340.97 L448.80,337.23 L451.11,333.50 L453.41,329.78 L455.72,326.10 L458.02,322.47 L460.33,318.90 L462.64,315.41 L464.94,312.01 L467.25,308.72 L469.55,305.54 L471.86,302.49 L474.17,299.58 L476.47,296.82 L478.78,294.23 L481.08,291.80 L483.39,289.56 L485.70,287.50 L488.00,285.63 L490.31,283.96 L492.61,282.48 L494.92,281.22 L497.23,280.15 L499.53,279.30 L501.84,278.65 L504.14,278.20 L506.45,277.96 L508.76,277.92 L511.06,278.07 L513.37,278.42 L515.67,278.96 L517.98,279.68 L520.29,280.57 L522.59,281.63 L524.90,282.86 L527.20,284.24 L529.51,285.76 L531.82,287.42 L534.12,289.21 L536.43,291.12 L538.73,293.14 L541.04,295.26 L543.35,297.48 L545.65,299.78 L547.96,302.15 L550.26,304.59 L552.57,307.09 L554.88,309.64 L557.18,312.24 L559.49,314.86 L561.79,317.51 L564.10,320.18 L566.41,322.86 L568.71,325.54 L571.02,328.23 L573.32,330.90 L575.63,333.57 L577.94,336.21 L580.24,338.83 L582.55,341.42 L584.85,343.98 L587.16,346.51 L589.47,348.99 L591.77,351.43 L594.08,353.82 L596.38,356.17 L598.69,358.46 L601.00,360.71 L603.30,362.89 L605.61,365.02 L607.91,367.10 L610.22,369.11 L612.53,371.07 L614.83,372.97 L617.14,374.81 L619.44,376.59 L621.75,378.31 L624.06,379.97 L626.36,381.58 L628.67,383.12 L630.97,384.61 L633.28,386.04 L635.59,387.42 L637.89,388.74 L640.20,390.01 L642.50,391.23 L644.81,392.39 L647.12,393.51 L649.42,394.58 L651.73,395.60 L654.03,396.57 L656.34,397.50 L658.65,398.39 L660.95,399.23 L663.26,400.04 L665.56,400.80 L667.87,401.53 L670.18,402.22 L672.48,402.88 L674.79,403.51 L677.09,404.10 L679.40,404.66 L681.71,405.20 L684.01,405.70 L686.32,406.18 L688.62,406.63 L690.93,407.06 L693.24,407.46 L695.54,407.84 L697.85,408.20 L700.15,408.54 L702.46,408.86 L704.77,409.17 L707.07,409.45 L709.38,409.72 L711.68,409.97 L713.99,410.21 L716.30,410.44 L718.60,410.65 L720.91,410.84 L723.21,411.03 L725.52,411.20 L727.83,411.37 L730.13,411.52 L732.44,411.67 L734.74,411.80 L737.05,411.93 L739.36,412.05 L741.66,412.16 L743.97,412.26 L746.27,412.36 L748.58,412.45 L750.89,412.54 L753.19,412.62 L755.50,412.69 L757.80,412.76 L760.11,412.82 L762.42,412.89 L764.72,412.94 L767.03,413.00 L769.33,413.04 L771.64,413.09 L773.95,413.13 L776.25,413.17 L778.56,413.21 L780.86,413.25 L783.17,413.28" fill="none" stroke="#FFC000" stroke-width="2.5" stroke-linejoin="round" stroke-linecap="round"/><path d="M561.79,408.53 L564.10,407.48 L566.41,406.27 L568.71,404.90 L571.02,403.35 L573.32,401.62 L575.63,399.69 L577.94,397.56 L580.24,395.22 L582.55,392.68 L584.85,389.93 L587.16,386.98 L589.47,383.82 L591.77,380.48 L594.08,376.95 L596.38,373.25 L598.69,369.39 L601.00,365.40 L603.30,361.29 L605.61,357.08 L607.91,352.80 L610.22,348.46 L612.53,344.10 L614.83,339.74 L617.14,335.41 L619.44,331.13 L621.75,326.92 L624.06,322.82 L626.36,318.85 L628.67,315.03 L630.97,311.38 L633.28,307.93 L635.59,304.68 L637.89,301.67 L640.20,298.91 L642.50,296.40 L644.81,294.15 L647.12,292.19 L649.42,290.50 L651.73,289.11 L654.03,288.00 L656.34,287.18 L658.65,286.65 L660.95,286.39 L663.26,286.42 L665.56,286.71 L667.87,287.27 L670.18,288.07 L672.48,289.12 L674.79,290.39 L677.09,291.87 L679.40,293.56 L681.71,295.43 L684.01,297.47 L686.32,299.67 L688.62,302.01 L690.93,304.48 L693.24,307.06 L695.54,309.74 L697.85,312.50 L700.15,315.33 L702.46,318.22 L704.77,321.15 L707.07,324.12 L709.38,327.10 L711.68,330.09 L713.99,333.08 L716.30,336.06 L718.60,339.01 L720.91,341.94 L723.21,344.83 L725.52,347.68 L727.83,350.49 L730.13,353.23 L732.44,355.92 L734.74,358.55 L737.05,361.10 L739.36,363.59 L741.66,366.01 L743.97,368.35 L746.27,370.62 L748.58,372.81 L750.89,374.92 L753.19,376.95 L755.50,378.91 L757.80,380.79 L760.11,382.59 L762.42,384.32 L764.72,385.97 L767.03,387.55 L769.33,389.06 L771.64,390.49 L773.95,391.86 L776.25,393.16 L778.56,394.40 L780.86,395.58 L783.17,396.69 L785.48,397.74 L787.78,398.74 L790.09,399.69 L792.39,400.58 L794.70,401.42 L797.01,402.22 L799.31,402.97 L801.62,403.68 L803.92,404.34 L806.23,404.97 L808.54,405.55 L810.84,406.10" fill="none" stroke="#FF0000" stroke-width="2.75" stroke-linejoin="round" stroke-linecap="round"/><path d="M220.51,401.77 L222.81,400.21 L225.12,398.49 L227.42,396.61 L229.73,394.56 L232.04,392.33 L234.34,389.91 L236.65,387.30 L238.95,384.49 L241.26,381.48 L243.57,378.26 L245.87,374.82 L248.18,371.17 L250.48,367.31 L252.79,363.23 L255.10,358.93 L257.40,354.43 L259.71,349.71 L262.01,344.79 L264.32,339.68 L266.63,334.38 L268.93,328.91 L271.24,323.26 L273.54,317.47 L275.85,311.53 L278.16,305.47 L280.46,299.30 L282.77,293.04 L285.07,286.70 L287.38,280.31 L289.69,273.88 L291.99,267.44 L294.30,261.01 L296.60,254.60 L298.91,248.25 L301.22,241.96 L303.52,235.77 L305.83,229.69 L308.13,223.75 L310.44,217.96 L312.75,212.35 L315.05,206.94 L317.36,201.73 L319.66,196.76 L321.97,192.04 L324.28,187.57 L326.58,183.39 L328.89,179.49 L331.19,175.89 L333.50,172.60 L335.81,169.62 L338.11,166.97 L340.42,164.65 L342.72,162.65 L345.03,160.99 L347.34,159.66 L349.64,158.66 L351.95,157.98 L354.25,157.62 L356.56,157.57 L358.87,157.83 L361.17,158.38 L363.48,159.21 L365.78,160.31 L368.09,161.65 L370.40,163.24 L372.70,165.05 L375.01,167.05 L377.31,169.24 L379.62,171.60 L381.93,174.10 L384.23,176.72 L386.54,179.44 L388.84,182.24 L391.15,185.11 L393.46,188.02 L395.76,190.94 L398.07,193.87 L400.37,196.78 L402.68,199.66 L404.99,202.48 L407.29,205.23 L409.60,207.90 L411.90,210.48 L414.21,212.95 L416.52,215.30 L418.82,217.52 L421.13,219.61 L423.43,221.56 L425.74,223.37 L428.05,225.03 L430.35,226.55 L432.66,227.92 L434.96,229.15 L437.27,230.24 L439.58,231.20 L441.88,232.03 L444.19,232.75 L446.49,233.35 L448.80,233.86 L451.11,234.28 L453.41,234.62 L455.72,234.90 L458.02,235.12 L460.33,235.30 L462.64,235.45 L464.94,235.59 L467.25,235.73 L469.55,235.87 L471.86,236.04 L474.17,236.24 L476.47,236.49 L478.78,236.79 L481.08,237.16 L483.39,237.60 L485.70,238.13 L488.00,238.75 L490.31,239.47 L492.61,240.29 L494.92,241.22 L497.23,242.26 L499.53,243.42 L501.84,244.69 L504.14,246.09 L506.45,247.60 L508.76,249.24 L511.06,250.99 L513.37,252.86 L515.67,254.84 L517.98,256.93 L520.29,259.13 L522.59,261.42 L524.90,263.81 L527.20,266.28 L529.51,268.82 L531.82,271.44 L534.12,274.11 L536.43,276.83 L538.73,279.58 L541.04,282.35 L543.35,285.12 L545.65,287.89 L547.96,290.63 L550.26,293.33 L552.57,295.97 L554.88,298.53 L557.18,301.00 L559.49,303.35 L561.79,305.56 L564.10,307.63 L566.41,309.52 L568.71,311.23 L571.02,312.73 L573.32,314.02 L575.63,315.08 L577.94,315.90 L580.24,316.47 L582.55,316.78 L584.85,316.84 L587.16,316.65 L589.47,316.19 L591.77,315.49 L594.08,314.55 L596.38,313.37 L598.69,311.98 L601.00,310.38 L603.30,308.60 L605.61,306.66 L607.91,304.58 L610.22,302.38 L612.53,300.08 L614.83,297.72 L617.14,295.32 L619.44,292.91 L621.75,290.51 L624.06,288.15 L626.36,285.85 L628.67,283.64 L630.97,281.54 L633.28,279.57 L635.59,277.76 L637.89,276.12 L640.20,274.67 L642.50,273.41 L644.81,272.38 L647.12,271.56 L649.42,270.98 L651.73,270.63 L654.03,270.53 L656.34,270.67 L658.65,271.04 L660.95,271.66 L663.26,272.51 L665.56,273.59 L667.87,274.89 L670.18,276.40 L672.48,278.12 L674.79,280.03 L677.09,282.12 L679.40,284.38 L681.71,286.80 L684.01,289.36 L686.32,292.04 L688.62,294.84 L690.93,297.75 L693.24,300.74 L695.54,303.81 L697.85,306.94 L700.15,310.11 L702.46,313.33 L704.77,316.57 L707.07,319.82 L709.38,323.07 L711.68,326.32 L713.99,329.55 L716.30,332.76 L718.60,335.93 L720.91,339.05 L723.21,342.14 L725.52,345.16 L727.83,348.13 L730.13,351.03 L732.44,353.87 L734.74,356.63 L737.05,359.32 L739.36,361.93 L741.66,364.45 L743.97,366.90 L746.27,369.27 L748.58,371.55 L750.89,373.75 L753.19,375.86 L755.50,377.89 L757.80,379.84 L760.11,381.71 L762.42,383.50 L764.72,385.21" fill="none" stroke="#4472C4" stroke-width="2.25" stroke-linejoin="round" stroke-linecap="round"/></g>
<g font-family="Liberation Sans, sans-serif" font-size="12" fill="#626262"><text x="202.5" y="112.5" text-anchor="end" textLength="45.5" lengthAdjust="spacingAndGlyphs">110,000</text><text x="202.5" y="168.1" text-anchor="end" textLength="38.5" lengthAdjust="spacingAndGlyphs">90,000</text><text x="202.5" y="223.7" text-anchor="end" textLength="38.5" lengthAdjust="spacingAndGlyphs">70,000</text><text x="202.5" y="279.2" text-anchor="end" textLength="38.5" lengthAdjust="spacingAndGlyphs">50,000</text><text x="202.5" y="334.8" text-anchor="end" textLength="38.5" lengthAdjust="spacingAndGlyphs">30,000</text><text x="202.5" y="390.4" text-anchor="end" textLength="38.5" lengthAdjust="spacingAndGlyphs">10,000</text><text x="202.5" y="446.0" text-anchor="end" textLength="42.7" lengthAdjust="spacingAndGlyphs">-10,000</text></g>
<g font-family="Liberation Sans, sans-serif" font-size="11.2" fill="#626262"><text transform="translate(223.5,456.5) rotate(-45)" text-anchor="end">2022/1/7</text><text transform="translate(255.8,456.5) rotate(-45)" text-anchor="end">2022/1/14</text><text transform="translate(288.1,456.5) rotate(-45)" text-anchor="end">2022/1/21</text><text transform="translate(320.4,456.5) rotate(-45)" text-anchor="end">2022/1/28</text><text transform="translate(352.7,456.5) rotate(-45)" text-anchor="end">2022/2/4</text><text transform="translate(385.0,456.5) rotate(-45)" text-anchor="end">2022/2/11</text><text transform="translate(417.3,456.5) rotate(-45)" text-anchor="end">2022/2/18</text><text transform="translate(449.6,456.5) rotate(-45)" text-anchor="end">2022/2/25</text><text transform="translate(481.9,456.5) rotate(-45)" text-anchor="end">2022/3/4</text><text transform="translate(514.2,456.5) rotate(-45)" text-anchor="end">2022/3/11</text><text transform="translate(546.5,456.5) rotate(-45)" text-anchor="end">2022/3/18</text><text transform="translate(578.8,456.5) rotate(-45)" text-anchor="end">2022/3/25</text><text transform="translate(611.1,456.5) rotate(-45)" text-anchor="end">2022/4/1</text><text transform="translate(643.4,456.5) rotate(-45)" text-anchor="end">2022/4/8</text><text transform="translate(675.7,456.5) rotate(-45)" text-anchor="end">2022/4/15</text><text transform="translate(708.0,456.5) rotate(-45)" text-anchor="end">2022/4/22</text><text transform="translate(740.3,456.5) rotate(-45)" text-anchor="end">2022/4/29</text><text transform="translate(772.6,456.5) rotate(-45)" text-anchor="end">2022/5/6</text><text transform="translate(804.9,456.5) rotate(-45)" text-anchor="end">2022/5/13</text></g>
<g font-family="Liberation Sans, sans-serif" font-size="12" fill="#5f5f5f"><rect x="679" y="115.5" width="19" height="6" fill="#0070C0"/><text x="700" y="121.8" textLength="57.0" lengthAdjust="spacingAndGlyphs">週移動平均</text><rect x="679" y="135.2" width="19" height="6" fill="#A5A5A5"/><text x="700" y="141.6" textLength="136.0" lengthAdjust="spacingAndGlyphs">6次残差・週移動平均-近似</text><rect x="679" y="155.0" width="19" height="6" fill="#ED7D31"/><text x="700" y="161.3" textLength="126.4" lengthAdjust="spacingAndGlyphs">オミクロンBA.1,BA,2残差</text><line x1="679" y1="177.8" x2="698" y2="177.8" stroke="#000000" stroke-width="2.5"/><text x="700" y="181.1" textLength="101.4" lengthAdjust="spacingAndGlyphs">オミクロンBA.1近似</text><line x1="679" y1="197.5" x2="698" y2="197.5" stroke="#FFC000" stroke-width="2.5"/><text x="700" y="200.8" textLength="117.0" lengthAdjust="spacingAndGlyphs">オミクロンBA.2 XE近似</text><line x1="679" y1="217.2" x2="698" y2="217.2" stroke="#FF0000" stroke-width="2.5"/><text x="700" y="220.6" textLength="62.8" lengthAdjust="spacingAndGlyphs">XE近似予測?</text><line x1="679" y1="237.0" x2="698" y2="237.0" stroke="#4472C4" stroke-width="2.5"/><text x="700" y="240.3" textLength="45.5" lengthAdjust="spacingAndGlyphs">近似合計</text></g>
<text x="275" y="86.5" font-family="Liberation Sans, sans-serif" font-size="16" font-weight="bold" fill="#595959" textLength="461" lengthAdjust="spacingAndGlyphs">オミクロン　感染確認者数BA.1と BA.2&#160; XE近似曲線試算Ⅱ&#160; 2022/5/8</text>
</svg>
<div class="a" style="left:921px;top:488px;width:36px;height:11px;background:#fff;border:1px solid #8c8c8c"></div>

<!-- sheet tabs -->
<div class="a" style="left:0;top:528px;width:1024px;height:15px;background:#e8e8e8"></div>
<div class="a" style="left:0;top:527.6px;width:1024px;height:1px;background:#c6c6c6"></div>
<svg class="a" style="left:12px;top:532px" width="30" height="7" viewBox="0 0 30 7"><path d="M5,0.5 L5,6.5 L1.5,3.5z" fill="#217346"/><path d="M17,1 L20,3.5 L17,6" fill="none" stroke="#aaa" stroke-width="0.8"/></svg>
<svg class="a" style="left:42px;top:536px" width="8" height="3" viewBox="0 0 8 3"><rect x="0.5" y="0.5" width="1.6" height="1.6" fill="#217346"/><rect x="3.2" y="0.5" width="1.6" height="1.6" fill="#217346"/><rect x="5.9" y="0.5" width="1.6" height="1.6" fill="#217346"/></svg>
<div class="a" style="left:53px;top:530px;width:1px;height:12px;background:#c0c0c0"></div>
<div class="a" style="left:87px;top:530px;width:1px;height:12px;background:#c0c0c0"></div>
<div class="a" style="left:120px;top:530px;width:1px;height:12px;background:#c0c0c0"></div>
<div class="a" style="left:198px;top:530px;width:1px;height:12px;background:#c0c0c0"></div>
<div class="a" style="left:247px;top:530px;width:1px;height:12px;background:#c0c0c0"></div>
<div class="a" style="left:280px;top:530px;width:1px;height:12px;background:#c0c0c0"></div>
<div class="a" style="left:319px;top:527px;width:77px;height:15px;background:#fff;border-left:1px solid #c6c6c6;border-right:1px solid #c6c6c6"></div>
<div class="a" style="left:320px;top:540px;width:75px;height:1.5px;background:#2f8354"></div>
<div class="a" style="left:443px;top:530px;width:1px;height:12px;background:#c0c0c0"></div>
<div class="a" style="left:490px;top:530px;width:1px;height:12px;background:#c0c0c0"></div>
<div class="a" style="left:553px;top:530px;width:1px;height:12px;background:#c0c0c0"></div>
<svg class="a" style="left:570px;top:529.5px" width="12" height="12" viewBox="0 0 12 12"><circle cx="6" cy="6" r="5" fill="none" stroke="#555" stroke-width="0.9"/><path d="M6,3 L6,9 M3,6 L9,6" stroke="#555" stroke-width="0.9"/></svg>
<svg class="a" style="left:614px;top:532px" width="3" height="9" viewBox="0 0 3 9"><circle cx="1.5" cy="1" r="0.6" fill="#aaa"/><circle cx="1.5" cy="4" r="0.6" fill="#aaa"/><circle cx="1.5" cy="7" r="0.6" fill="#aaa"/></svg>
<div class="a" style="left:623px;top:531.5px;width:389px;height:9px;background:#fff;border:1px solid #9a9a9a"></div>
<div class="a" style="left:631px;top:531.5px;width:1px;height:9px;background:#9a9a9a"></div>
<svg class="a" style="left:625px;top:533px" width="4" height="5" viewBox="0 0 4 5"><path d="M3,0 L3,5 L0,2.5z" fill="#444"/></svg>
<div class="a" style="left:1003.5px;top:531.5px;width:1px;height:9px;background:#9a9a9a"></div>
<svg class="a" style="left:1006px;top:533px" width="4" height="5" viewBox="0 0 4 5"><path d="M0,0 L0,5 L3,2.5z" fill="#444"/></svg>

<!-- status bar -->
<div class="a" style="left:0;top:543px;width:1024px;height:12px;background:#f3f2f1"></div>
<svg class="a" style="left:40px;top:545px" width="9" height="8" viewBox="0 0 9 8"><circle cx="4" cy="1.3" r="1" fill="#555"/><path d="M0.5,2.8 L7.5,2.8 M4,2.8 L4,5 L2,7.5 M4,5 L6,7.5" fill="none" stroke="#555" stroke-width="0.9"/><circle cx="6.8" cy="6" r="1.6" fill="none" stroke="#555" stroke-width="0.7"/></svg>
<svg class="a" style="left:866px;top:545px" width="60" height="9" viewBox="0 0 60 9"><rect x="1" y="1" width="9" height="7" fill="none" stroke="#aaa" stroke-width="0.8"/><path d="M1,3.5 L10,3.5 M1,6 L10,6 M4,1 L4,8 M7,1 L7,8" stroke="#aaa" stroke-width="0.6"/><rect x="22" y="1" width="9" height="7" fill="none" stroke="#aaa" stroke-width="0.8"/><rect x="24" y="2" width="5" height="5" fill="#ccc"/><rect x="43" y="1" width="9" height="7" fill="none" stroke="#aaa" stroke-width="0.8"/><path d="M46,1 L46,4 L49,4 L49,1" fill="none" stroke="#aaa" stroke-width="0.6"/></svg>
<div class="a" style="left:928px;top:549px;width:5px;height:1px;background:#666"></div>
<div class="a" style="left:935px;top:548.5px;width:53px;height:1.5px;background:#a6a6a6"></div>
<div class="a" style="left:963px;top:545.5px;width:3px;height:7px;background:#707070"></div>
<svg class="a" style="left:989px;top:545px" width="8" height="8" viewBox="0 0 8 8"><path d="M4,0.5 L4,7.5 M0.5,4 L7.5,4" stroke="#666" stroke-width="0.9"/></svg>

<!-- taskbar -->
<div class="a" style="left:0;top:555px;width:1024px;height:21px;background:#cddde4"></div>
<svg class="a" style="left:8px;top:561px" width="10" height="9" viewBox="0 0 10 9"><path d="M0,1 L4.3,0.4 L4.3,4.2 L0,4.2z M5,0.3 L10,0 L10,4.2 L5,4.2z M0,4.8 L4.3,4.8 L4.3,8.6 L0,8z M5,4.8 L10,4.8 L10,9 L5,8.7z" fill="#000"/></svg>
<div class="a" style="left:26px;top:555px;width:182px;height:21px;background:#fff"></div>
<svg class="a" style="left:31px;top:560px" width="11" height="11" viewBox="0 0 11 11"><circle cx="6.5" cy="4.5" r="3.5" fill="none" stroke="#333" stroke-width="1"/><path d="M4,7 L1,10" stroke="#333" stroke-width="1.2"/></svg>
<div class="a" style="left:218px;top:561px;width:9px;height:9px;border:1.5px solid #222;border-radius:50%"></div>
<svg class="a" style="left:241px;top:560px" width="12" height="10" viewBox="0 0 12 10"><rect x="2" y="2" width="6" height="6" fill="none" stroke="#222" stroke-width="1.2"/><path d="M0,1 L0,9 M10,1 L10,4 M10,6 L10,9" stroke="#222" stroke-width="1.2"/></svg>
<!-- explorer -->
<svg class="a" style="left:268px;top:559px" width="13" height="12" viewBox="0 0 13 12"><path d="M0.5,1 L4.5,1 L5.5,2.2 L12.5,2.2 L12.5,11 L0.5,11z" fill="#e9b744"/><rect x="0.5" y="3" width="12" height="8" fill="#f8d878"/><rect x="3" y="6.2" width="7" height="4.8" fill="#2b7ed2"/><rect x="5" y="8" width="3" height="3" fill="#8fc3f0"/></svg>
<!-- edge -->
<svg class="a" style="left:294px;top:559px" width="14" height="14" viewBox="0 0 14 14"><defs><linearGradient id="eg" x1="0" y1="0" x2="1" y2="1"><stop offset="0" stop-color="#36b5e8"/><stop offset="0.55" stop-color="#1a78d0"/><stop offset="1" stop-color="#0e4f9e"/></linearGradient></defs><circle cx="6.8" cy="6.8" r="6.3" fill="url(#eg)"/><path d="M7,0.6 A6.3,6.3 0 0 1 13,7.5 L9.5,7.8 Q8.5,4.5 5.5,4.8z" fill="#52d06a"/><path d="M4.5,9 Q4,6 7,5.5 Q9.5,5.5 9.8,8 Q8,9.8 6.5,9.5 Q5,9.5 4.5,9z" fill="#d8ecf6"/></svg>

<!-- mail -->
<svg class="a" style="left:320px;top:559px" width="14" height="13" viewBox="0 0 14 13"><path d="M0.5,4.5 L7,0.5 L13.5,4.5 L13.5,12 L0.5,12z" fill="#1d9be8"/><path d="M0.5,4.5 L7,0.5 L13.5,4.5z" fill="#0e5eb0"/><path d="M1.5,4.5 L12.5,4.5 L7,8z" fill="#f2f7fb"/></svg>
<!-- excel -->
<div class="a" style="left:340px;top:555px;width:26px;height:21px;background:#dfe9ed"></div>
<svg class="a" style="left:346px;top:559px" width="14" height="13" viewBox="0 0 14 13"><rect x="4" y="0" width="10" height="13" fill="#1e7145"/><rect x="0" y="2.5" width="8" height="8" fill="#107c41"/><path d="M2,4.5 L6,8.5 M6,4.5 L2,8.5" stroke="#fff" stroke-width="1.2"/></svg>
<!-- photos -->
<div class="a" style="left:366px;top:555px;width:26px;height:21px;background:#f1a977"></div>
<svg class="a" style="left:372px;top:559px" width="14" height="13" viewBox="0 0 14 13"><rect x="0" y="0" width="14" height="13" fill="#1c5fa8"/><path d="M0,13 L5,6 L9,10 L11,8 L14,11 L14,13z" fill="#0b3a6e"/><circle cx="10" cy="3.5" r="1.5" fill="#9fd2ff"/></svg>
<svg class="a" style="left:400px;top:559px" width="11" height="13" viewBox="0 0 11 13"><path d="M0,0 L8,0 L11,3 L11,13 L0,13z" fill="#fff" stroke="#aac" stroke-width="0.6"/><rect x="2" y="6" width="7" height="5" fill="#2a6fc9"/></svg>
<!-- chrome -->
<div class="a" style="left:425px;top:559px;width:13px;height:13px;border-radius:50%;background:conic-gradient(from -30deg,#db4437 0 120deg,#f4c20d 120deg 240deg,#0f9d58 240deg 360deg)"></div>
<div class="a" style="left:428.5px;top:562.5px;width:6px;height:6px;border-radius:50%;background:#4285f4;border:1px solid #fff"></div>
<div class="a" style="left:264px;top:574.5px;width:21px;height:1.5px;background:#3f6ea8;opacity:.8"></div>
<div class="a" style="left:290px;top:574.5px;width:20px;height:1.5px;background:#3f6ea8;opacity:.8"></div>
<div class="a" style="left:316px;top:574.5px;width:20px;height:1.5px;background:#3f6ea8;opacity:.8"></div>
<div class="a" style="left:342px;top:574.5px;width:22px;height:1.5px;background:#3f6ea8;opacity:.8"></div>
<div class="a" style="left:368px;top:574.5px;width:22px;height:1.5px;background:#e9803d"></div>
<div class="a" style="left:395px;top:574.5px;width:20px;height:1.5px;background:#3f6ea8;opacity:.8"></div>
<div class="a" style="left:421px;top:574.5px;width:20px;height:1.5px;background:#3f6ea8;opacity:.8"></div>
<!-- tray -->
<svg class="a" style="left:808px;top:559px" width="14" height="12" viewBox="0 0 14 12"><circle cx="5" cy="4" r="3" fill="#f6b928"/><ellipse cx="8" cy="8" rx="5.5" ry="3" fill="#e8eef3" stroke="#8aa" stroke-width="0.5"/></svg>
<svg class="a" style="left:898px;top:562px" width="9" height="6" viewBox="0 0 9 6"><path d="M1,5 L4.5,1 L8,5" fill="none" stroke="#222" stroke-width="1"/></svg>
<svg class="a" style="left:910px;top:559px" width="40" height="12" viewBox="0 0 40 12"><rect x="1" y="2" width="6" height="8" fill="none" stroke="#333" stroke-width="0.9"/><path d="M7,5 L9,5 L9,8" fill="none" stroke="#333" stroke-width="0.9"/><circle cx="18" cy="6.5" r="4" fill="none" stroke="#333" stroke-width="1.2"/><rect x="18" y="6" width="4" height="5" fill="#333"/><path d="M26,4 L28,4 L31,1.5 L31,10.5 L28,8 L26,8z" fill="none" stroke="#333" stroke-width="0.9"/><path d="M33,4 Q34.5,6 33,8 M35,2.5 Q37.5,6 35,9.5" fill="none" stroke="#333" stroke-width="0.8"/></svg>
<svg class="a" style="left:1004px;top:559px" width="10" height="11" viewBox="0 0 10 11"><path d="M0,0 L10,0 L10,8 L6,8 L3,11 L3,8 L0,8z" fill="#111"/><path d="M2,3 L8,3 M2,5.5 L8,5.5" stroke="#cddde4" stroke-width="0.8"/></svg>
<svg width="1024" height="576" style="position:absolute;left:0;top:0" font-family="Liberation Sans, sans-serif"><text x="11.5" y="12.2" font-size="8.0" fill="#ffffff" stroke="#ffffff" stroke-width="0.00" font-weight="normal" textLength="25.0" lengthAdjust="spacingAndGlyphs">自動保存</text><text x="43.5" y="11.2" font-size="5.5" fill="#217346" stroke="#217346" stroke-width="0.15" font-weight="bold" textLength="7.5" lengthAdjust="spacingAndGlyphs">オン</text><text x="230.7" y="11.8" font-size="8.5" fill="#ffffff" stroke="#ffffff" stroke-width="0.00" font-weight="normal" textLength="156.9" lengthAdjust="spacingAndGlyphs">変異ウィルス寿命と感染変動 2022_03_16 (1) • 保存済み</text><text x="445.0" y="11.8" font-size="8.0" fill="#1d4a30" stroke="#1d4a30" stroke-width="0.15" font-weight="normal" textLength="38.8" lengthAdjust="spacingAndGlyphs">検索 (Alt+Q)</text><text x="818.0" y="12.1" font-size="8.5" fill="#ffffff" stroke="#ffffff" stroke-width="0.00" font-weight="normal" textLength="58.0" lengthAdjust="spacingAndGlyphs">ICHIKAWA Toshiro</text><text x="7.6" y="29.3" font-size="8.5" fill="#444444" stroke="#444444" stroke-width="0.15" font-weight="normal" textLength="19.3" lengthAdjust="spacingAndGlyphs">ファイル</text><text x="42.5" y="29.3" font-size="8.5" fill="#444444" stroke="#444444" stroke-width="0.15" font-weight="normal" textLength="17.3" lengthAdjust="spacingAndGlyphs">ホーム</text><text x="75.0" y="29.3" font-size="8.5" fill="#444444" stroke="#444444" stroke-width="0.15" font-weight="normal" textLength="12.9" lengthAdjust="spacingAndGlyphs">挿入</text><text x="103.9" y="29.3" font-size="8.5" fill="#444444" stroke="#444444" stroke-width="0.15" font-weight="normal" textLength="45.3" lengthAdjust="spacingAndGlyphs">ページ レイアウト</text><text x="165.5" y="29.3" font-size="8.5" fill="#444444" stroke="#444444" stroke-width="0.15" font-weight="normal" textLength="13.5" lengthAdjust="spacingAndGlyphs">数式</text><text x="193.6" y="29.3" font-size="8.5" fill="#444444" stroke="#444444" stroke-width="0.15" font-weight="normal" textLength="16.9" lengthAdjust="spacingAndGlyphs">データ</text><text x="224.9" y="29.3" font-size="8.5" fill="#444444" stroke="#444444" stroke-width="0.15" font-weight="normal" textLength="14.1" lengthAdjust="spacingAndGlyphs">校閲</text><text x="253.6" y="29.3" font-size="8.5" fill="#444444" stroke="#444444" stroke-width="0.15" font-weight="normal" textLength="13.3" lengthAdjust="spacingAndGlyphs">表示</text><text x="281.5" y="29.3" font-size="8.5" fill="#444444" stroke="#444444" stroke-width="0.15" font-weight="normal" textLength="17.6" lengthAdjust="spacingAndGlyphs">ヘルプ</text><text x="315.7" y="29.0" font-size="8.5" fill="#444444" stroke="#444444" stroke-width="0.15" font-weight="normal" textLength="39.1" lengthAdjust="spacingAndGlyphs">Power Pivot</text><text x="954.3" y="29.6" font-size="8.5" fill="#2a6a45" stroke="#2a6a45" stroke-width="0.35" font-weight="normal" textLength="21.7" lengthAdjust="spacingAndGlyphs">コメント</text><text x="998.0" y="29.6" font-size="8.5" fill="#2a6a45" stroke="#2a6a45" stroke-width="0.35" font-weight="normal" textLength="14.3" lengthAdjust="spacingAndGlyphs">共有</text><text x="60.5" y="538.4" font-size="8.0" fill="#444444" stroke="#444444" stroke-width="0.15" font-weight="normal" textLength="18.5" lengthAdjust="spacingAndGlyphs">グラフ8</text><text x="93.7" y="538.4" font-size="8.0" fill="#444444" stroke="#444444" stroke-width="0.15" font-weight="normal" textLength="19.0" lengthAdjust="spacingAndGlyphs">グラフ9</text><text x="127.9" y="538.4" font-size="8.0" fill="#444444" stroke="#444444" stroke-width="0.15" font-weight="normal" textLength="62.9" lengthAdjust="spacingAndGlyphs">第6次再生産率OWD</text><text x="206.0" y="538.4" font-size="8.0" fill="#444444" stroke="#444444" stroke-width="0.15" font-weight="normal" textLength="34.0" lengthAdjust="spacingAndGlyphs">BLOGグラフ</text><text x="253.0" y="538.4" font-size="8.0" fill="#444444" stroke="#444444" stroke-width="0.15" font-weight="normal" textLength="20.0" lengthAdjust="spacingAndGlyphs">グラフ2</text><text x="287.0" y="538.4" font-size="8.0" fill="#444444" stroke="#444444" stroke-width="0.15" font-weight="normal" textLength="24.0" lengthAdjust="spacingAndGlyphs">グラフ12</text><text x="327.0" y="538.4" font-size="8.0" fill="#217346" stroke="#217346" stroke-width="0.15" font-weight="normal" textLength="60.0" lengthAdjust="spacingAndGlyphs">近似グラフ全オミクロン</text><text x="402.0" y="538.4" font-size="8.0" fill="#444444" stroke="#444444" stroke-width="0.15" font-weight="normal" textLength="33.0" lengthAdjust="spacingAndGlyphs">XEグラフ14</text><text x="450.0" y="538.4" font-size="8.0" fill="#444444" stroke="#444444" stroke-width="0.15" font-weight="normal" textLength="32.0" lengthAdjust="spacingAndGlyphs">残差グラフ1</text><text x="497.0" y="538.4" font-size="8.0" fill="#444444" stroke="#444444" stroke-width="0.15" font-weight="normal" textLength="50.0" lengthAdjust="spacingAndGlyphs">NHK感染確認値</text><text x="4.6" y="551.6" font-size="7.5" fill="#444444" stroke="#444444" stroke-width="0.15" font-weight="normal" textLength="24.8" lengthAdjust="spacingAndGlyphs">準備完了</text><text x="49.8" y="551.8" font-size="7.5" fill="#444444" stroke="#444444" stroke-width="0.15" font-weight="normal" textLength="82.0" lengthAdjust="spacingAndGlyphs">アクセシビリティ: 検討が必要です</text><text x="1001.5" y="551.5" font-size="7.5" fill="#444444" stroke="#444444" stroke-width="0.15" font-weight="normal" textLength="17.5" lengthAdjust="spacingAndGlyphs">136%</text><text x="46.9" y="568.8" font-size="8.5" fill="#333333" stroke="#333333" stroke-width="0.15" font-weight="normal" textLength="60.0" lengthAdjust="spacingAndGlyphs">ここに入力して検索</text><text x="825.2" y="569.0" font-size="8.0" fill="#222222" stroke="#222222" stroke-width="0.15" font-weight="normal" textLength="15.3" lengthAdjust="spacingAndGlyphs">15°C</text><text x="846.0" y="569.2" font-size="8.5" fill="#222222" stroke="#222222" stroke-width="0.15" font-weight="normal" textLength="43.7" lengthAdjust="spacingAndGlyphs">晴れ時々くもり</text><text x="969.6" y="563.4" font-size="6.5" fill="#222222" stroke="#222222" stroke-width="0.15" font-weight="normal" textLength="14.2" lengthAdjust="spacingAndGlyphs">23:23</text><text x="962.0" y="572.1" font-size="6.5" fill="#222222" stroke="#222222" stroke-width="0.15" font-weight="normal" textLength="30.6" lengthAdjust="spacingAndGlyphs">2022/05/08</text><text x="948.8" y="569.5" font-size="10.5" fill="#222222" stroke="#222222" stroke-width="0.15" font-weight="normal" textLength="7.0" lengthAdjust="spacingAndGlyphs">A</text><text x="924.5" y="496.3" font-size="7.0" fill="#555555" stroke="#555555" stroke-width="0.15" font-weight="normal" textLength="28.5" lengthAdjust="spacingAndGlyphs">グラフ エリア</text></svg>
</body></html>
